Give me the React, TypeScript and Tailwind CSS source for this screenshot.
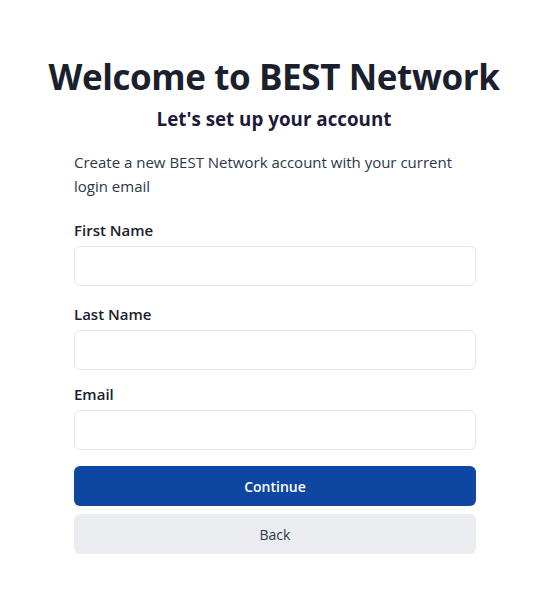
import React from 'react';

const fields = [
  { label: 'First Name', type: 'text', mt: 'mt-5' },
  { label: 'Last Name', type: 'text', mt: 'mt-4' },
  { label: 'Email', type: 'email', mt: 'mt-3' },
];

export default function App() {
  return (
    <div className="min-h-screen bg-white font-['Open_Sans',sans-serif] text-[#1a202c]">
      <div className="flex flex-col items-center pt-[57px]">
        <h1 className="text-[35px] leading-10 font-bold tracking-[-0.4px] text-[#1a202c]">Welcome to BEST Network</h1>
        <h2 className="mt-2 text-[18.8px] leading-7 font-bold text-[#1e1b3a]">Let's set up your account</h2>
      </div>
      <div className="mt-[17px] pl-[74px] pr-[72px]">
        <p className="text-[15px] leading-6 text-[#2d3748]">
          Create a new BEST Network account with your current login email
        </p>
        {fields.map((f) => (
          <div key={f.label} className={f.mt}>
            <label className="block text-[15px] leading-6 font-semibold text-[#1a202c]">{f.label}</label>
            <input
              type={f.type}
              className="mt-1 block h-10 w-full rounded-md border border-[#e2e8f0] bg-white px-3 outline-none"
            />
          </div>
        ))}
        <button className="mt-4 flex h-10 w-full items-center justify-center rounded-md bg-[#0d47a1] text-[14px] font-semibold text-white">
          Continue
        </button>
        <button className="mt-2 flex h-10 w-full items-center justify-center rounded-md bg-[#ebecf0] text-[14px] text-[#2d3748]">
          Back
        </button>
      </div>
    </div>
  );
}
